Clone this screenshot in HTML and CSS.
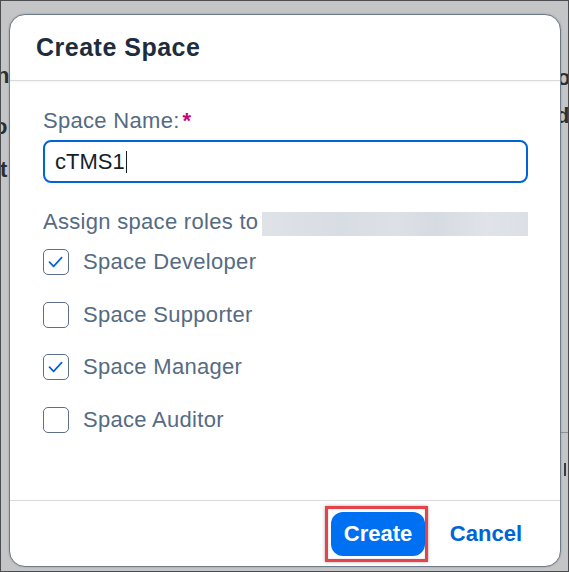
FILE: index.html
```html
<!DOCTYPE html>
<html lang="en">
<head>
<meta charset="utf-8">
<title>Create Space</title>
<link rel="stylesheet" href="styles.css">
</head>
<body>
<div class="screen">
  <div class="backdrop">
    <span class="frag frag-n">n</span>
    <span class="frag frag-o">o</span>
    <span class="frag frag-t">t</span>
    <span class="frag frag-ro">o</span>
    <span class="frag frag-rd">d</span>
    <span class="rline"></span>
    <span class="rmark"></span>
  </div>
  <div class="dialog">
    <header class="dialog-header">
      <h1 class="title">Create Space</h1>
    </header>
    <div class="dialog-body">
      <label class="field-label">Space Name:<span class="req">*</span></label>
      <div class="input"><span class="input-text">cTMS1</span><span class="caret"></span></div>
      <div class="assign">
        <span class="assign-text">Assign space roles to</span>
        <span class="redacted"></span>
      </div>
      <ul class="roles">
        <li class="role">
          <span class="box"><svg viewBox="0 0 26 26" width="26" height="26"><path d="M6.5 13.2 L10.6 17.3 L18.6 8.6" fill="none" stroke="#0064d9" stroke-width="1.7" stroke-linecap="round" stroke-linejoin="round"/></svg></span>
          <span class="role-label">Space Developer</span>
        </li>
        <li class="role">
          <span class="box"></span>
          <span class="role-label">Space Supporter</span>
        </li>
        <li class="role">
          <span class="box"><svg viewBox="0 0 26 26" width="26" height="26"><path d="M6.5 13.2 L10.6 17.3 L18.6 8.6" fill="none" stroke="#0064d9" stroke-width="1.7" stroke-linecap="round" stroke-linejoin="round"/></svg></span>
          <span class="role-label">Space Manager</span>
        </li>
        <li class="role">
          <span class="box"></span>
          <span class="role-label">Space Auditor</span>
        </li>
      </ul>
    </div>
    <footer class="dialog-footer">
      <div class="btn-wrap">
        <button class="btn btn-primary">Create</button>
        <span class="highlight"></span>
      </div>
      <button class="btn btn-ghost">Cancel</button>
    </footer>
  </div>
</div>
</body>
</html>
```

FILE: styles.css
```css
* { box-sizing: border-box; }
html, body { margin: 0; padding: 0; }
body {
  width: 569px;
  height: 572px;
  font-family: "Liberation Sans", Arial, sans-serif;
  overflow: hidden;
}
.screen {
  position: relative;
  width: 569px;
  height: 572px;
  border: 1px solid #4b4d50;
  background: #c4c5c7;
  padding: 13px 0 0 8px;
  overflow: hidden;
}
.backdrop { position: absolute; inset: 0; }
.frag {
  position: absolute;
  font-size: 22px;
  font-weight: bold;
  color: #2b2f33;
  line-height: 22px;
}
.frag-n { left: -5px; top: 64px; }
.frag-o { left: -7px; top: 115px; }
.frag-t { left: -1px; top: 158px; }
.frag-ro { left: 556px; top: 66px; }
.frag-rd { left: 555px; top: 104px; }
.rline { position: absolute; left: 560px; width: 8px; top: 431px; height: 1px; background: #8e9296; }
.rmark { position: absolute; left: 563px; width: 2px; top: 462px; height: 13px; background: #3a3d40; }

.dialog {
  position: relative;
  width: 552px;
  height: 553px;
  background: #fff;
  border: 1px solid #6f7b88;
  border-radius: 16px;
  display: flex;
  flex-direction: column;
  box-shadow: 0 0 2px rgba(0,0,0,0.25);
}
.dialog-header {
  height: 66px;
  padding-left: 26px;
  border-bottom: 1px solid #d9dadc;
  box-shadow: 0 1px 2px rgba(0,0,0,0.05);
  display: flex;
  align-items: center;
}
.title {
  margin: 0;
  font-size: 25px;
  font-weight: bold;
  letter-spacing: 0.5px;
  color: #1d2d3e;
  line-height: 65px;
}
.dialog-body {
  flex: 1;
  padding: 27px 32px 0 33px;
}
.field-label {
  display: block;
  font-size: 22px;
  line-height: 26px;
  letter-spacing: 0.3px;
  color: #556b82;
}
.req {
  color: #c0087a;
  font-weight: bold;
  margin-left: 3px;
}
.input {
  margin-top: 6px;
  height: 43px;
  border: 2px solid #0064d9;
  border-radius: 8px;
  padding-left: 10px;
  display: flex;
  align-items: center;
}
.input-text {
  font-size: 22px;
  line-height: 39px;
  color: #131e29;
}
.caret {
  width: 1px;
  height: 22px;
  background: #131e29;
  margin-left: 1px;
}
.assign {
  margin-top: 26px;
  display: flex;
  align-items: center;
  height: 26px;
}
.assign-text {
  font-size: 22px;
  line-height: 26px;
  letter-spacing: 0.3px;
  color: #556b82;
  white-space: nowrap;
}
.redacted {
  flex: 1;
  height: 24px;
  margin-left: 4px;
  margin-top: 3px;
  background: linear-gradient(90deg, #dfe3e8 0%, #d8dde3 30%, #dde1e6 50%, #d6dbe1 65%, #e0e4e9 85%, #dbe0e5 100%);
}
.roles {
  list-style: none;
  margin: 1px 0 0 0;
  padding: 0;
}
.role {
  height: 52.5px;
  display: flex;
  align-items: center;
}
.box {
  width: 26px;
  height: 26px;
  border: 1px solid #5b7088;
  border-radius: 5px;
  flex: none;
  position: relative;
}
.box svg { position: absolute; left: -1px; top: -1px; }
.role-label {
  margin-left: 14px;
  font-size: 22px;
  line-height: 26px;
  letter-spacing: 0.3px;
  color: #556b82;
}
.dialog-footer {
  height: 66px;
  border-top: 1px solid #d9dadc;
  display: flex;
  align-items: center;
  justify-content: flex-end;
  padding-right: 25px;
  gap: 12px;
}
.btn-wrap { position: relative; display: flex; }
.btn {
  font-family: "Liberation Sans", Arial, sans-serif;
  font-size: 22px;
  font-weight: bold;
  height: 44px;
  padding: 0 13px;
  border: none;
  border-radius: 12px;
  cursor: pointer;
}
.btn-primary {
  background: #0070f2;
  color: #fff;
  width: 94px;
}
.btn-ghost {
  background: transparent;
  color: #0064d9;
}
.highlight {
  position: absolute;
  left: -6px;
  right: -3px;
  top: -6px;
  bottom: -6px;
  border: 3px solid #e5434b;
  box-shadow: 0 0 3px rgba(0,0,0,0.35), inset 0 0 2px rgba(0,0,0,0.2);
  pointer-events: none;
}
```
